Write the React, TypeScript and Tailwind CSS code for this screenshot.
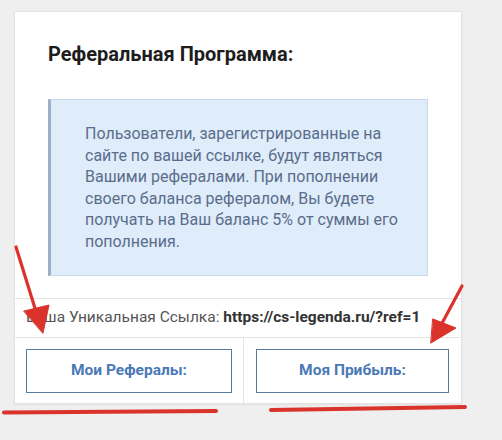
export default function App() {
  return (
    <div className="relative h-[440px] w-[502px] overflow-hidden bg-[#efefef] pt-[11px] pl-[14px] font-['Roboto',sans-serif]">
      {/* card */}
      <div className="w-[448px] border border-[#e3e3e3] bg-white shadow-[0_1px_2px_rgba(0,0,0,0.06)]">
        <div className="px-[33px] pt-[28px] pb-[22px]">
          <h2 className="text-[20px] leading-[28px] font-bold text-[#1d1d1d]">Реферальная Программа:</h2>
          <div className="mt-[31px] border border-l-[3px] border-[#c9d8e8] border-l-[#9ab0c8] bg-[#dfecf9] pt-[23px] pr-[22px] pb-[23px] pl-[34px]">
            <p className="text-[16px] leading-[21.5px] text-[#5a6d8c]">
              Пользователи, зарегистрированные на сайте по вашей ссылке, будут являться Вашими рефералами. При пополнении своего баланса рефералом, Вы будете получать на Ваш баланс 5% от суммы его пополнения.
            </p>
          </div>
        </div>
        <div className="flex h-[39px] items-center border-t border-[#e4e4e4] pl-[11px] text-[15.5px] text-[#555555]">
          <span>
            Ваша Уникальная Ссылка: <b className="font-bold text-[#333333]">https://cs-legenda.ru/?ref=1</b>
          </span>
        </div>
        <div className="grid grid-cols-[228px_1fr] border-t border-[#e4e4e4]">
          <div className="px-[11px] pt-[11px] pb-[10px]">
            <button className="flex h-[44px] w-full items-center justify-center border border-[#5a7aa0] text-[15.5px] font-bold text-[#4a79b6]">
              Мои Рефералы:
            </button>
          </div>
          <div className="border-l border-[#e4e4e4] px-[12px] pt-[11px] pb-[10px]">
            <button className="flex h-[44px] w-full items-center justify-center border border-[#5a7aa0] text-[15.5px] font-bold text-[#4a79b6]">
              Моя Прибыль:
            </button>
          </div>
        </div>
      </div>

      {/* red annotations drawn over the screenshot */}
      <svg className="pointer-events-none absolute inset-0" width="502" height="440" viewBox="0 0 502 440">
        <g fill="#d9332b" stroke="#d9332b" strokeLinecap="round" strokeLinejoin="round">
          <line x1="16" y1="247" x2="38" y2="318" strokeWidth="3.2" />
          <polygon points="24,311 49,305 43,333" strokeWidth="1" />
          <line x1="462" y1="286" x2="440" y2="327" strokeWidth="3.2" />
          <polygon points="433,319 456,328 431,343" strokeWidth="1" />
          <line x1="4" y1="412.5" x2="216" y2="411" strokeWidth="4" />
          <line x1="271" y1="410" x2="465" y2="407" strokeWidth="4" />
        </g>
      </svg>
    </div>
  );
}
